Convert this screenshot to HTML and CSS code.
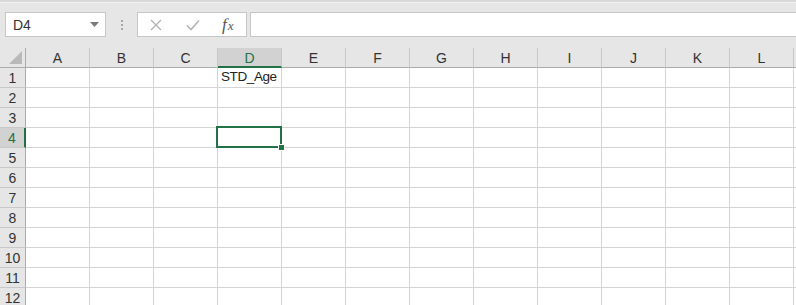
FILE: index.html
```html
<!DOCTYPE html>
<html lang="en">
<head>
  <meta charset="UTF-8" />
  <title>Sheet</title>
  <link rel="stylesheet" href="styles.css">
</head>
<body>

  <div class="formula-bar">
    <div class="name-box">
      <span>D4</span>
      <svg class="caret" width="9" height="5" viewBox="0 0 9 5"><path d="M0 0h9L4.5 5z" fill="#7a7a7a"/></svg>
    </div>
    <div class="grip"><i></i><i></i><i></i></div>
    <div class="fx-box">
      <svg class="fx-icon" width="12" height="12" viewBox="0 0 12 12"><path d="M1 1l10 10M11 1L1 11" stroke="#b4b4b4" stroke-width="1.4" fill="none"/></svg>
      <svg class="fx-icon" width="14" height="12" viewBox="0 0 14 12"><path d="M1 6.5l4 4L13 1.5" stroke="#b4b4b4" stroke-width="1.6" fill="none"/></svg>
      <span class="fx-label"><i>f</i><i class="x">x</i></span>
    </div>
    <div class="formula-input"></div>
  </div>

  <div class="sheet" id="sheet"></div>

  <script>
    const cols = ["A","B","C","D","E","F","G","H","I","J","K","L"];
    const sheet = document.getElementById("sheet");

    function cell(cls, text) {
      const el = document.createElement("div");
      el.className = cls;
      if (text) el.textContent = text;
      sheet.appendChild(el);
      return el;
    }

    const corner = cell("corner");
    corner.innerHTML = '<svg width="13" height="13" viewBox="0 0 13 13"><path d="M13 0v13H0z" fill="#b9b9b9"/></svg>';
    cols.forEach(c => cell(c === "D" ? "col-head active" : "col-head", c));
    cell("col-head rest");

    for (let r = 1; r <= 12; r++) {
      cell(r === 4 ? "row-head active" : "row-head", String(r));
      cols.forEach(c => {
        let text = "";
        if (c === "D" && r === 1) text = "STD_Age";
        const el = cell("cell", text);
        if (c === "D" && r === 4) {
          el.classList.add("selected");
          el.innerHTML = '<span class="sel-box"></span><span class="handle"></span>';
        }
      });
      cell("cell rest");
    }
  </script>
</body>
</html>
```

FILE: styles.css
```css
:root {
  --green: #217346;
  --chrome: #e6e6e6;
  --grid: #d4d4d4;
  --head-line: #c8c8c8;
  --text: #222;
}

* {
  box-sizing: border-box;
  margin: 0;
  padding: 0;
}

body {
  font-family: 'Liberation Sans', Arial, sans-serif;
  font-size: 13px;
  color: var(--text);
  background: #fff;
  width: 796px;
  height: 305px;
  overflow: hidden;
}

.formula-bar {
  height: 48px;
  background: var(--chrome);
  border-top: 2px solid #d9d9d9;
  box-shadow: inset 0 1px 0 #f2f2f2;
  display: flex;
  align-items: flex-start;
  padding: 10px 0 0 5px;
}

.name-box {
  width: 101px;
  height: 25px;
  background: #fff;
  border: 1px solid #c6c6c6;
  display: flex;
  align-items: center;
  justify-content: space-between;
  padding: 0 6px 0 7px;
  font-size: 14px;
  color: #333;
}

.grip {
  width: 31px;
  height: 25px;
  display: flex;
  flex-direction: column;
  align-items: center;
  justify-content: center;
  gap: 2px;
}

.grip i {
  width: 2px;
  height: 2px;
  background: #a8a8a8;
}

.fx-box {
  width: 110px;
  height: 25px;
  background: #fff;
  border: 1px solid #c6c6c6;
  display: flex;
  align-items: center;
  padding: 0 0 0 12px;
  gap: 24px;
}

.fx-label {
  font-family: 'Liberation Serif', 'Times New Roman', serif;
  font-size: 17px;
  color: #555;
  margin-left: -2px;
}

.fx-label .x {
  font-size: 13px;
  margin-left: 1px;
}

.formula-input {
  flex: 1;
  height: 25px;
  margin-left: 3px;
  background: #fff;
  border: 1px solid #c6c6c6;
  border-right: none;
}

.sheet {
  display: grid;
  grid-template-columns: 26px repeat(12, 64px) 1fr;
  grid-auto-rows: 20px;
}

.corner,
.col-head,
.row-head {
  background: var(--chrome);
  color: #333;
  font-size: 14px;
}

.corner {
  border-right: 1px solid #ababab;
  border-bottom: 1px solid #ababab;
  display: flex;
  align-items: flex-end;
  justify-content: flex-end;
  padding: 0 3px 3px 0;
}

.col-head {
  border-right: 1px solid var(--head-line);
  border-bottom: 1px solid #ababab;
  display: flex;
  align-items: center;
  justify-content: center;
  padding-top: 1px;
}

.col-head.rest {
  border-right: none;
}

.col-head.active {
  background: #d2d2d2;
  color: var(--green);
  border-bottom: 2px solid var(--green);
  padding-top: 2px;
}

.row-head {
  border-right: 1px solid #ababab;
  border-bottom: 1px solid var(--head-line);
  display: flex;
  align-items: center;
  justify-content: center;
  padding-top: 1px;
}

.row-head.active {
  background: #d2d2d2;
  color: var(--green);
  border-right: 2px solid var(--green);
}

.cell {
  border-right: 1px solid var(--grid);
  border-bottom: 1px solid var(--grid);
  padding: 1px 0 0 3px;
  font-size: 13.5px;
  letter-spacing: -0.4px;
  white-space: nowrap;
}

.cell.rest {
  border-right: none;
}

.selected {
  position: relative;
}

.sel-box {
  position: absolute;
  left: -2px;
  top: -2px;
  right: -1px;
  bottom: -1px;
  border: 2px solid var(--green);
}

.handle {
  position: absolute;
  right: -4px;
  bottom: -4px;
  width: 7px;
  height: 7px;
  background: var(--green);
  border: 1px solid #fff;
}
```
